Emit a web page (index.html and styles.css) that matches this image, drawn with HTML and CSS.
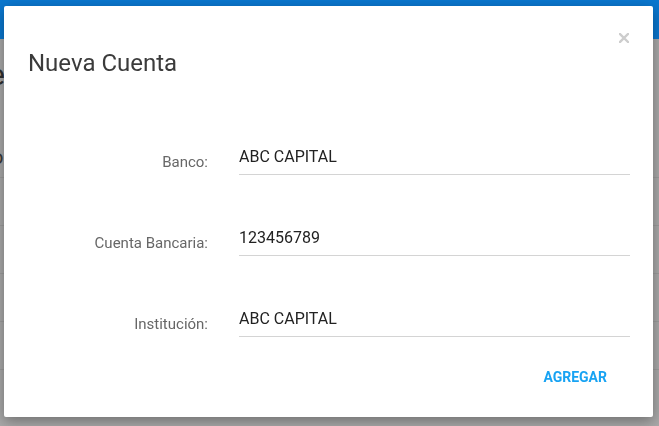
FILE: index.html
```
<!DOCTYPE html>
<html lang="es">
<head>
  <meta charset="UTF-8">
  <meta name="viewport" content="width=device-width, initial-scale=1.0">
  <title>Nueva Cuenta</title>
  <link rel="stylesheet" href="styles.css">
</head>
<body>
  <div class="page">
    <header class="topbar"></header>
    <h1 class="page-title">e</h1>
    <p class="page-text">o</p>
    <div class="rows">
      <div class="row"></div>
      <div class="row"></div>
      <div class="row"></div>
      <div class="row"></div>
      <div class="row"></div>
    </div>
  </div>

  <div class="overlay">
    <div class="modal">
      <div class="modal-header">
        <h2 class="modal-title">Nueva Cuenta</h2>
        <button class="close" aria-label="Cerrar">
          <svg width="10" height="10" viewBox="0 0 10 10">
            <path d="M1 1 L9 9 M9 1 L1 9" stroke="#cdcdcd" stroke-width="2.4" stroke-linecap="square" />
          </svg>
        </button>
      </div>

      <form class="form">
        <label class="label" for="banco">Banco:</label>
        <input class="field" id="banco" type="text" value="ABC CAPITAL">

        <label class="label" for="cuenta">Cuenta Bancaria:</label>
        <input class="field" id="cuenta" type="text" value="123456789">

        <label class="label" for="institucion">Institución:</label>
        <input class="field" id="institucion" type="text" value="ABC CAPITAL">
      </form>

      <div class="modal-footer">
        <button class="btn-flat" id="agregar">AGREGAR</button>
      </div>
    </div>
  </div>
</body>
</html>
```

FILE: styles.css
```
* {
  margin: 0;
  padding: 0;
  box-sizing: border-box;
}

body {
  height: 100vh;
  overflow: hidden;
  background-color: #a9a9a9;
  font-family: Roboto, "Liberation Sans", sans-serif;
}

/* page behind the dialog (already dimmed) */
.page {
  height: 100%;
}

.topbar {
  height: 39px;
  background-color: #0a77cf;
}

.page-title {
  margin: 20px 0 0 -11px;
  font-size: 30px;
  font-weight: 400;
  line-height: 32px;
  color: #2f2f2f;
}

.page-text {
  margin: 54px 0 0 -8px;
  font-size: 20px;
  line-height: 24px;
  color: #3a3a3a;
}

.rows {
  margin-top: 8px;
}

.row {
  height: 48px;
  border-top: 1px solid #9d9d9d;
}

/* dialog */
.overlay {
  position: fixed;
  inset: 0;
  display: flex;
  padding: 6px 6px 9px 4px;
}

.modal {
  flex: 1;
  display: flex;
  flex-direction: column;
  background-color: #fff;
  border-radius: 2px;
  box-shadow: 0 4px 14px rgba(0, 0, 0, 0.35);
}

.modal-header {
  display: flex;
  justify-content: space-between;
  align-items: flex-start;
  padding: 27px 24px 0 24px;
}

.modal-title {
  margin-top: 16px;
  font-size: 24px;
  font-weight: 400;
  line-height: 28px;
  color: #3b3b3b;
}

.close {
  display: block;
  border: none;
  background: none;
  line-height: 0;
}

.form {
  display: grid;
  grid-template-columns: 182px 1fr;
  column-gap: 31px;
  row-gap: 45px;
  margin-top: 62px;
  padding: 0 23px 0 22px;
}

.label {
  align-self: end;
  padding-bottom: 4px;
  font-size: 15px;
  line-height: 18px;
  text-align: right;
  color: #676767;
}

.field {
  width: 100%;
  padding: 8px 0;
  border: none;
  border-bottom: 1px solid #d4d4d4;
  outline: none;
  font-family: Roboto, "Liberation Sans", sans-serif;
  font-size: 16px;
  line-height: 19px;
  color: #222;
  background: transparent;
}

.modal-footer {
  display: flex;
  justify-content: flex-end;
  margin-top: 24px;
  padding-right: 30px;
}

.btn-flat {
  padding: 8px 16px;
  border: none;
  background: none;
  font-family: Roboto, "Liberation Sans", sans-serif;
  font-size: 14px;
  font-weight: 700;
  line-height: 16px;
  color: #18a3f3;
}
```
